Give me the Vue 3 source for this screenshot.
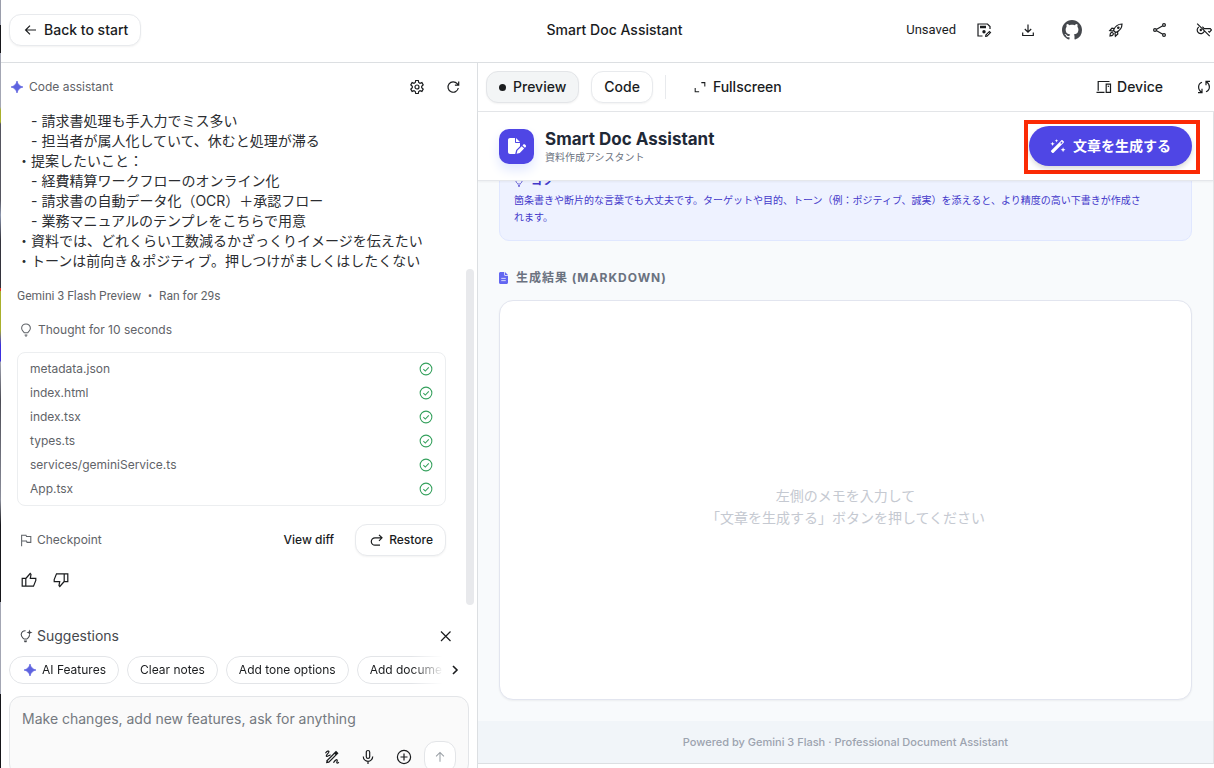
<template>
  <svg class="sprite" aria-hidden="true">
    <symbol id="arrow-left" viewBox="0 0 16 16">
      <path d="M14 8H4M8 3.600 3.600 8 8 12.400" class="line" />
    </symbol>
    <symbol id="arrow-up" viewBox="0 0 16 16">
      <path d="M8 13.5V3M3.5 7.3 8 2.8l4.5 4.5" class="line" />
    </symbol>
    <symbol id="spark" viewBox="0 0 16 16">
      <path d="M8 2C8.700 5.200 10.800 7.300 14 8 10.800 8.700 8.700 10.800 8 14 7.300 10.800 5.200 8.700 2 8 5.200 7.300 7.300 5.200 8 2z" fill="currentColor" stroke="currentColor" stroke-width=".7" />
    </symbol>
    <symbol id="save-edit" viewBox="0 0 16 16">
      <path d="M6.500 14H2V2h9.500l2.500 2.500V7" class="line" />
      <path d="M4 3.800h6v2.400H4zM8 8a1.700 1.700 0 1 1 0 3.400A1.700 1.700 0 0 1 8 8z" fill="currentColor" />
      <path d="m9 15 .3-2.200L13.400 8.700l1.900 1.900-4.100 4.100z" fill="currentColor" />
      <path d="m10.600 13.400 2.700-2.700" stroke="#fff" stroke-width=".8" />
    </symbol>
    <symbol id="download" viewBox="0 0 16 16">
      <path d="M8 2.500v7.500M4.800 7 8 10.200 11.200 7M2.700 10.500v3h10.600v-3" class="line" />
    </symbol>
    <symbol id="github" viewBox="0 0 16 16">
      <path
        fill="currentColor"
        d="M8 0C3.58 0 0 3.58 0 8c0 3.54 2.29 6.53 5.47 7.59.4.07.55-.17.55-.38 0-.19-.01-.82-.01-1.490-2.010.37-2.530-.49-2.690-.94-.09-.23-.48-.94-.82-1.130-.28-.15-.68-.52-.01-.53.63-.01 1.080.58 1.230.82.72 1.210 1.870.87 2.330.66.07-.52.28-.87.51-1.070-1.780-.2-3.640-.89-3.640-3.950 0-.87.31-1.590.82-2.150-.08-.2-.36-1.020.08-2.120 0 0 .67-.21 2.200.82.64-.18 1.320-.27 2-.27s1.360.09 2 .27c1.530-1.040 2.200-.82 2.200-.82.44 1.100.16 1.920.08 2.120.51.56.82 1.270.82 2.150 0 3.070-1.870 3.750-3.650 3.950.29.25.54.73.54 1.480 0 1.070-.01 1.930-.01 2.200 0 .21.15.46.55.38A8.010 8.010 0 0 0 16 8c0-4.420-3.580-8-8-8z"
      />
    </symbol>
    <symbol id="rocket" viewBox="0 0 16 16">
      <path d="M5.500 8.300C7 4.500 9.800 2 14 2c0 4.200-2.500 7-6.300 8.500zM6.300 6.500 4 6.200 1.800 8.600l3.500.5M9.500 9.700l.3 2.300-2.400 2.200-.5-3.500" class="line" />
      <path d="M2 14c0-1.600.3-2.600 1-3.200.6-.5 1.500-.4 1.900.1.600.5.600 1.400.1 2-.5.600-1.500 1-3 1.100z" class="line" />
      <circle cx="10.300" cy="5.700" r="1.300" fill="currentColor" />
    </symbol>
    <symbol id="share" viewBox="0 0 16 16">
      <path d="M4.200 7.400 10.800 3.700M4.200 8.600l6.600 3.700" class="line" />
      <circle cx="3" cy="8" r="1.400" class="line" />
      <circle cx="12" cy="3" r="1.400" class="line" />
      <circle cx="12" cy="13" r="1.400" class="line" />
    </symbol>
    <symbol id="key-off" viewBox="0 0 16 16">
      <path d="M1.200 1.700 13.700 14.200M2.800 4.900a3.700 3.700 0 1 0 5.400 4.700M6.300 4.800c.8.400 1.400 1 1.800 1.900h6.200l1.200 1.300-2 2.200-1.200-.9" class="line" />
      <circle cx="4.800" cy="8" r="1.200" fill="currentColor" />
    </symbol>
    <symbol id="gear" viewBox="0 0 16 16">
      <path d="M6.700 1.500h2.600l.4 2 1.300.8 1.900-.7 1.300 2.300-1.500 1.300v1.600l1.500 1.300-1.300 2.300-1.900-.7-1.300.8-.4 2H6.700l-.4-2-1.300-.8-1.900.7-1.300-2.300 1.500-1.300V7.200L1.800 5.900l1.300-2.300 1.900.7 1.300-.8z" class="line" />
      <circle cx="8" cy="8" r="2" class="line" />
    </symbol>
    <symbol id="refresh" viewBox="0 0 16 16">
      <path d="M13.300 9A5.200 5.200 0 1 1 12.200 4.700L13.500 6M13.700 2.400V6.200H9.900" class="line" />
    </symbol>
    <symbol id="bulb" viewBox="0 0 16 16">
      <path d="M5.500 11.200h5M5.800 11c0-1-2.800-2-2.800-4.900a5 5 0 0 1 10 0C13 9 10.200 10 10.200 11M6.500 13.600h3" class="line" />
      <path d="M6.500 14.200h3l-.6 1.300H7.100z" fill="currentColor" />
    </symbol>
    <symbol id="bulb-spark" viewBox="0 0 16 16">
      <path d="M5.300 11.500h4.200M5.300 11.200C4.800 10 2.500 9.200 2.500 6.400A4.700 4.700 0 0 1 7.500 1.900M12 7c-.1 2.500-2.100 3.200-2.500 4.300" class="line" />
      <path d="M5.500 13h3.800l-.8 2.200H6.300zM12 .5l.9 2.600 2.600.9-2.600.9L12 7.500l-.9-2.600L8.500 4l2.600-.9z" fill="currentColor" />
    </symbol>
    <symbol id="check" viewBox="0 0 16 16">
      <circle cx="8" cy="8" r="6.700" class="line" />
      <path d="m5 8.200 2.200 2.200 4-4.200" class="line" />
    </symbol>
    <symbol id="flag" viewBox="0 0 16 16">
      <path d="M3 15V2.500h5l.6 1.600h4.900v6.600H9.200l-.6-1.600H3" class="line" />
    </symbol>
    <symbol id="redo" viewBox="0 0 16 16">
      <path d="M13.800 5.800H7a3.700 3.700 0 0 0 0 7.400H12M11 2.800l3 3-3 3" class="line" />
    </symbol>
    <symbol id="thumb" viewBox="0 0 16 16">
      <path d="M1.200 6.300h3.600v7.900H1.200zM4.800 6.500l4.400-5 .8.900-.7 3.900h5.500v2.200l-2.300 5.700H4.800" class="line" />
    </symbol>
    <symbol id="close" viewBox="0 0 16 16">
      <path d="m3 3.500 9.500 9.500M12.500 3.500 3 13" class="line" />
    </symbol>
    <symbol id="chevron" viewBox="0 0 16 16">
      <path d="m6 4 4 4-4 4" class="line bold" />
    </symbol>
    <symbol id="draw" viewBox="0 0 16 16">
      <path d="M1.500 4.200c1.500-2.500 3.300-2.500 3.400-1.500.2 1.500-3 3-2.600 4.400.4 1.300 3.200-1.500 4.300-1M9.500 13.700c1.300-2.300 2.900-3.500 3.600-2.800.8.800-.9 2.200-.2 3 .4.500 1.200 0 2-.7" class="line" />
      <path d="M2 14.300 2.600 11.200 12 1.800l2.500 2.500-9.400 9.400z" fill="currentColor" />
      <path d="m4 12.300 7-7" stroke="#fafafa" stroke-width="1.100" />
    </symbol>
    <symbol id="mic" viewBox="0 0 16 16">
      <path d="M8 1.500c1 0 1.700.7 1.700 1.700v4.600a1.700 1.700 0 0 1-3.400 0V3.200c0-1 .7-1.700 1.700-1.700zM3.300 7.600a4.700 4.700 0 0 0 9.400 0M8 12.300V15" class="line" />
    </symbol>
    <symbol id="plus" viewBox="0 0 16 16">
      <circle cx="8" cy="8" r="6.600" class="line" />
      <path d="M8 4.500v7M4.500 8h7" class="line" />
    </symbol>
    <symbol id="expand" viewBox="0 0 16 16">
      <path d="M9.500 3h4v4.500M2.500 9v4.500H7" class="line" />
    </symbol>
    <symbol id="devices" viewBox="0 0 16 16">
      <path d="M13.500 2.500H2.200v9.200M.5 13.300h8" class="line" />
      <path d="M10.200 5.200h4.300v8.100h-4.300z" class="line" />
      <path d="M11.700 6.700h1.400v1.200h-1.400z" fill="currentColor" />
    </symbol>
    <symbol id="sync" viewBox="0 0 16 16">
      <path d="M6 3.300C1.500 5 1.500 11 5.800 13.300M2 13.700h4V9.700M10 12.700c4.500-1.700 4.500-7.700.2-10M14 2.300h-4v4" class="line" />
    </symbol>
    <symbol id="file-pen" viewBox="0 0 18 16">
      <path d="M0 2C0 .9.9 0 2 0h5v4c0 .6.400 1 1 1h4v3.300l-3.800 3.800L7.200 16H2c-1.100 0-2-.9-2-2zM8 0l4 4H8z" fill="currentColor" />
      <path d="m8.600 15.800.8-3.300 4.300-4.300 2.400 2.400-4.300 4.300zM14.500 7.400l.8-.8c.5-.5 1.200-.5 1.700 0l.7.700c.5.5.5 1.200 0 1.700l-.8.800z" fill="currentColor" />
    </symbol>
    <symbol id="file" viewBox="0 0 12 16">
      <path d="M2 0h5v4c0 .6.400 1 1 1h4v9c0 1.100-.9 2-2 2H2c-1.100 0-2-.9-2-2V2C0 .9.900 0 2 0zM8 0l4 4H8z" fill="currentColor" />
      <path d="M3 8.500h6M3 11.500h6" stroke="#fff" />
    </symbol>
    <symbol id="wand" viewBox="0 0 18 16">
      <path d="m1.300 13 11.400-11.400c.5-.5 1.200-.5 1.700 0l1 1c.5.500.5 1.200 0 1.700L4 15.700c-.5.500-1.200.5-1.700 0l-1-1c-.5-.5-.5-1.200 0-1.700z" fill="currentColor" />
      <path d="m11.500 4.500 1.200 1.200 1.500-1.900-.9-.9z" fill="#4f46e5" />
      <path d="m2.800 3 .7 1.800L5.300 5.500l-1.800.7L2.800 8l-.7-1.800L.3 5.500l1.800-.7zM7.300 0l.5 1.500 1.500.5-1.500.5L7.300 4l-.5-1.500L5.300 2l1.500-.5zM14.800 9.500l.8 2 2 .8-2 .8-.8 2-.8-2-2-.8 2-.8z" fill="currentColor" />
    </symbol>
  </svg>

  <div class="app">
    <div class="edge"></div>

    <header class="topbar">
      <button class="btn back">
        <svg class="icon"><use href="#arrow-left" /></svg>
        Back to start
      </button>
      <h1 class="project">Smart Doc Assistant</h1>
      <div class="actions">
        <span class="unsaved">Unsaved</span>
        <button
          v-for="action in actions"
          :key="action.icon"
          class="icon-btn"
          :aria-label="action.label"
        >
          <svg :class="['icon', action.icon]"><use :href="'#' + action.icon" /></svg>
        </button>
      </div>
    </header>

    <div class="workspace">
      <aside class="assistant">
        <div class="assistant-head">
          <svg class="icon accent"><use href="#spark" /></svg>
          <span class="assistant-name">Code assistant</span>
          <button class="icon-btn" aria-label="Settings">
            <svg class="icon"><use href="#gear" /></svg>
          </button>
          <button class="icon-btn" aria-label="Reset">
            <svg class="icon"><use href="#refresh" /></svg>
          </button>
        </div>

        <div class="chat">
          <p class="prompt">{{ prompt }}</p>
          <p class="run-info">Gemini 3 Flash Preview<span class="dot">•</span>Ran for 29s</p>
          <p class="thought">
            <svg class="icon small"><use href="#bulb" /></svg>
            Thought for 10 seconds
          </p>
          <ul class="files">
            <li v-for="file in files" :key="file">
              {{ file }}
              <svg class="icon small done"><use href="#check" /></svg>
            </li>
          </ul>
          <div class="checkpoint">
            <svg class="icon small"><use href="#flag" /></svg>
            <span class="checkpoint-label">Checkpoint</span>
            <button class="btn-text">View diff</button>
            <button class="btn restore">
              <svg class="icon"><use href="#redo" /></svg>
              Restore
            </button>
          </div>
          <div class="feedback">
            <button class="icon-btn" aria-label="Good response">
              <svg class="icon"><use href="#thumb" /></svg>
            </button>
            <button class="icon-btn" aria-label="Bad response">
              <svg class="icon flipped"><use href="#thumb" /></svg>
            </button>
          </div>
        </div>
        <div class="scrollbar"></div>

        <div class="suggest-head">
          <svg class="icon small"><use href="#bulb-spark" /></svg>
          <span>Suggestions</span>
          <button class="icon-btn" aria-label="Close suggestions">
            <svg class="icon"><use href="#close" /></svg>
          </button>
        </div>
        <div class="suggest-row">
          <div class="chips">
            <button v-for="(chip, i) in chips" :key="chip" class="chip">
              <svg v-if="i === 0" class="icon accent"><use href="#spark" /></svg>
              {{ chip }}
            </button>
          </div>
          <button class="next" aria-label="More suggestions">
            <svg class="icon"><use href="#chevron" /></svg>
          </button>
        </div>

        <div class="composer">
          <textarea
            v-model="message"
            rows="1"
            aria-label="Message"
            placeholder="Make changes, add new features, ask for anything"
          ></textarea>
          <div class="tools">
            <button class="icon-btn" aria-label="Annotate">
              <svg class="icon"><use href="#draw" /></svg>
            </button>
            <button class="icon-btn" aria-label="Voice input">
              <svg class="icon"><use href="#mic" /></svg>
            </button>
            <button class="icon-btn" aria-label="Add file">
              <svg class="icon"><use href="#plus" /></svg>
            </button>
            <button class="send" aria-label="Send">
              <svg class="icon small"><use href="#arrow-up" /></svg>
            </button>
          </div>
        </div>
      </aside>

      <section class="stage">
        <div class="toolbar">
          <button
            :class="['btn', 'tab', { active: view === 'preview' }]"
            @click="view = 'preview'"
          >
            <span v-if="view === 'preview'" class="tab-dot"></span>
            Preview
          </button>
          <button :class="['btn', 'tab', { active: view === 'code' }]" @click="view = 'code'">
            <span v-if="view === 'code'" class="tab-dot"></span>
            Code
          </button>
          <span class="divider"></span>
          <button class="tool">
            <svg class="icon small"><use href="#expand" /></svg>
            Fullscreen
          </button>
          <button class="tool device">
            <svg class="icon"><use href="#devices" /></svg>
            Device
          </button>
          <button class="icon-btn" aria-label="Reload preview">
            <svg class="icon"><use href="#sync" /></svg>
          </button>
        </div>

        <div class="preview">
          <header class="doc-head">
            <span class="logo">
              <svg><use href="#file-pen" /></svg>
            </span>
            <div class="brand">
              <h2>Smart Doc Assistant</h2>
              <p>資料作成アシスタント</p>
            </div>
            <div class="generate-wrap">
              <button class="generate">
                <svg><use href="#wand" /></svg>
                文章を生成する
              </button>
            </div>
          </header>

          <main class="doc-body">
            <div class="tip">
              <h3>
                <svg class="icon tiny"><use href="#bulb" /></svg>
                コツ
              </h3>
              <p>
                箇条書きや断片的な言葉でも大丈夫です。ターゲットや目的、トーン（例：ポジティブ、誠実）を添えると、より精度の高い下書きが作成さ<br />れます。
              </p>
            </div>
            <h3 class="result-title">
              <svg><use href="#file" /></svg>
              生成結果 (MARKDOWN)
            </h3>
            <div class="result">
              <p>左側のメモを入力して<br />「文章を生成する」ボタンを押してください</p>
            </div>
          </main>

          <footer class="doc-foot">Powered by Gemini 3 Flash · Professional Document Assistant</footer>
        </div>
      </section>
    </div>
  </div>
</template>

<script setup>
import { ref } from 'vue';

const view = ref('preview');
const message = ref('');

const actions = [
  { icon: 'save-edit', label: 'Save' },
  { icon: 'download', label: 'Download' },
  { icon: 'github', label: 'GitHub' },
  { icon: 'rocket', label: 'Deploy' },
  { icon: 'share', label: 'Share' },
  { icon: 'key-off', label: 'API key' }
];

const prompt = [
  '　- 請求書処理も手入力でミス多い',
  '　- 担当者が属人化していて、休むと処理が滞る',
  '・提案したいこと：',
  '　- 経費精算ワークフローのオンライン化',
  '　- 請求書の自動データ化（OCR）＋承認フロー',
  '　- 業務マニュアルのテンプレをこちらで用意',
  '・資料では、どれくらい工数減るかざっくりイメージを伝えたい',
  '・トーンは前向き＆ポジティブ。押しつけがましくはしたくない'
].join('\n');

const files = [
  'metadata.json',
  'index.html',
  'index.tsx',
  'types.ts',
  'services/geminiService.ts',
  'App.tsx'
];

const chips = ['AI Features', 'Clear notes', 'Add tone options', 'Add document types'];
</script>

<style>
body {
  margin: 0;
  overflow: hidden;
}
</style>

<style scoped>
.sprite {
  position: absolute;
  width: 0;
  height: 0;
}

.line {
  fill: none;
  stroke: currentColor;
  stroke-width: 1.2;
}

.line.bold {
  stroke-width: 1.6;
}

.app {
  position: relative;
  display: flex;
  flex-direction: column;
  height: 100vh;
  padding-left: 1px;
  box-sizing: border-box;
  overflow: hidden;
  background: #fff;
  color: #1a1c1e;
  font-family: Inter, 'Noto Sans CJK JP', sans-serif;
  font-size: 14px;
  line-height: 20px;
}

.app *,
.app *::before {
  box-sizing: border-box;
}

h1,
h2,
h3,
p,
ul {
  margin: 0;
  padding: 0;
}

button {
  display: inline-flex;
  align-items: center;
  justify-content: center;
  flex: none;
  padding: 0;
  border: none;
  background: none;
  color: inherit;
  font: inherit;
  white-space: nowrap;
  cursor: pointer;
}

/* Sliver of the window behind */
.edge {
  position: absolute;
  left: 0;
  top: 0;
  width: 1px;
  height: 100%;
  background: linear-gradient(
    #9a9dab 0 25px,
    #16161a 25px 53px,
    #a3a6b3 53px 107px,
    #a9b02c 110px 122px,
    #55555f 124px 200px,
    #8b95ad 215px,
    #33333c 240px 288px,
    #e0341f 288px 291px,
    #a9b02c 291px 330px,
    #3b2fe0 345px 361px,
    #a3a6b3 362px,
    #4c4c55 400px,
    #8b8e9b 500px,
    #16161a 525px 602px,
    #a3a6b3 602px 694px,
    #16161a 694px
  );
}

.icon {
  width: 16px;
  height: 16px;
  flex: none;
}

.icon.small {
  width: 14px;
  height: 14px;
}

.icon.tiny {
  width: 10px;
  height: 10px;
}

.icon.github {
  width: 20px;
  height: 20px;
  color: #45484d;
}

.icon.accent {
  color: #5e63e0;
}

.icon.flipped {
  transform: rotate(180deg);
}

.icon-btn {
  width: 32px;
  height: 32px;
}

.btn {
  height: 32px;
  border: 1px solid #e8eaed;
  border-radius: 12px;
  background: #fff;
  box-shadow: 0 1px 2px rgba(0, 0, 0, 0.05);
  font-weight: 500;
}

/* Top bar */
.topbar {
  display: grid;
  grid-template-columns: 1fr auto 1fr;
  align-items: center;
  flex: none;
  height: 63px;
  margin-right: -14px;
  padding: 0 8px 2px;
  border-bottom: 1px solid #dcdfe2;
}

.back {
  justify-self: start;
  gap: 6px;
  padding: 0 12px;
}

.project {
  font-size: 14px;
  font-weight: 500;
}

.actions {
  display: flex;
  justify-content: flex-end;
  align-items: center;
  gap: 12px;
}

.unsaved {
  font-family: Roboto, sans-serif;
  font-size: 13px;
}

.workspace {
  display: flex;
  flex: 1;
  min-height: 0;
}

/* Assistant panel */
.assistant {
  position: relative;
  display: flex;
  flex-direction: column;
  flex: 0 1 477px;
  min-width: 0;
  border-right: 1px solid #dcdfe2;
}

.assistant-head {
  display: flex;
  align-items: center;
  flex: none;
  gap: 4px;
  height: 48px;
  padding: 0 8px;
  color: #5f6368;
  font-size: 12px;
}

.assistant-head .icon-btn {
  color: #1a1c1e;
}

.assistant-name {
  flex: 1;
}

.chat {
  flex: 1;
  min-height: 0;
  overflow: hidden;
  padding: 0 31px 0 16px;
  color: #5f6368;
  font-size: 12px;
}

.prompt {
  color: #2b2d31;
  font-size: 14px;
  white-space: pre-wrap;
}

.run-info {
  margin-top: 15px;
  font-family: Roboto, sans-serif;
}

.dot {
  margin: 0 7px;
}

.thought {
  display: flex;
  align-items: center;
  gap: 5px;
  margin-top: 14px;
  padding-left: 2px;
  color: #5f6368;
}

.files {
  margin-top: 12px;
  padding: 4px 12px;
  border: 1px solid #eceef0;
  border-radius: 8px;
  list-style: none;
}

.files li {
  display: flex;
  align-items: center;
  justify-content: space-between;
  height: 24px;
}

.done {
  color: #34a05c;
}

.checkpoint {
  display: flex;
  align-items: center;
  gap: 4px;
  margin-top: 18px;
  padding-left: 2px;
}

.checkpoint-label {
  flex: 1;
}

.btn-text {
  margin-right: 17px;
  color: #1a1c1e;
  font-weight: 500;
}

.restore {
  gap: 5px;
  padding: 0 12px;
  color: #1a1c1e;
}

.feedback {
  display: flex;
  margin: 8px 0 0 -4px;
  color: #1a1c1e;
}

.scrollbar {
  position: absolute;
  top: 206px;
  right: 3px;
  width: 8px;
  height: 336px;
  border-radius: 4px;
  background: #e8e9ec;
}

.suggest-head {
  display: flex;
  align-items: center;
  flex: none;
  gap: 4px;
  height: 32px;
  margin-top: 12px;
  padding: 0 15px 0 18px;
  color: #45484d;
}

.suggest-head span {
  flex: 1;
}

.suggest-head .icon-btn {
  color: #1a1c1e;
}

.suggest-row {
  display: flex;
  align-items: center;
  flex: none;
  gap: 4px;
  height: 36px;
  padding: 0 14px 0 8px;
}

.chips {
  display: flex;
  flex: 1;
  gap: 8px;
  min-width: 0;
  overflow: hidden;
  mask-image: linear-gradient(to left, transparent, #000 32px);
}

.chip {
  gap: 4px;
  height: 28px;
  padding: 0 12px;
  border: 1px solid #e3e5e8;
  border-radius: 14px;
  font-size: 12px;
}

.next {
  width: 16px;
}

.composer {
  flex: none;
  height: 80px;
  margin: 8px 8px -8px;
  padding: 12px;
  border: 1px solid #e3e5e8;
  border-radius: 12px;
  background: #fafafa;
}

.composer textarea {
  display: block;
  width: 100%;
  height: 20px;
  padding: 0;
  border: none;
  outline: none;
  resize: none;
  background: none;
  color: inherit;
  font: inherit;
}

.composer textarea::placeholder {
  color: #747980;
}

.tools {
  display: flex;
  justify-content: flex-end;
  gap: 4px;
  margin-top: 12px;
}

.send {
  width: 32px;
  height: 32px;
  border: 1px solid #e3e5e8;
  border-radius: 12px;
  background: #fff;
  color: #9aa0a6;
}

/* Preview side */
.stage {
  display: flex;
  flex-direction: column;
  flex: 1;
  min-width: 0;
}

.toolbar {
  display: flex;
  align-items: center;
  flex: none;
  height: 49px;
  margin-right: -6px;
  padding-left: 8px;
  border-bottom: 1px solid #e3e5e8;
}

.tab {
  gap: 7px;
  margin-right: 12px;
  padding: 0 12px;
}

.tab.active {
  border-color: #e3e5e8;
  background: #f3f5f6;
}

.tab-dot {
  width: 7px;
  height: 7px;
  border-radius: 50%;
  background: #1a1c1e;
}

.divider {
  width: 1px;
  height: 24px;
  margin-right: 27px;
  background: #e8eaed;
}

.tool {
  gap: 6px;
  height: 32px;
  font-weight: 500;
}

.device {
  gap: 5px;
  margin-left: auto;
  margin-right: 25px;
}

.preview {
  display: flex;
  flex-direction: column;
  flex: 1;
  min-height: 0;
  margin-bottom: 4px;
  border-right: 1px solid #e3e5e8;
  border-bottom: 1px solid #dcdfe2;
  background: #f8fafc;
}

.doc-head {
  position: relative;
  display: flex;
  align-items: center;
  flex: none;
  height: 69px;
  padding: 0 21px;
  background: #fff;
  border-bottom: 1px solid #e5e7eb;
  box-shadow: 0 1px 2px rgba(0, 0, 0, 0.05);
}

.logo {
  display: flex;
  align-items: center;
  justify-content: center;
  width: 35px;
  height: 35px;
  border-radius: 10px;
  background: #4f46e5;
  color: #fff;
  box-shadow: 0 6px 12px #e0e7ff;
}

.logo svg {
  width: 18px;
  height: 16px;
}

.brand {
  flex: 1;
  margin-left: 11px;
}

.brand h2 {
  color: #1f2937;
  font-size: 17px;
  font-weight: 700;
  line-height: 22px;
}

.brand p {
  color: #6b7280;
  font-size: 10px;
  line-height: 14px;
}

.generate-wrap {
  position: relative;
}

.generate-wrap::before {
  content: '';
  position: absolute;
  inset: -6px -8px -8px -5px;
  border: 4px solid #fb2a05;
}

.generate {
  position: relative;
  gap: 7px;
  height: 40px;
  padding: 0 21px;
  border-radius: 20px;
  background: #4f46e5;
  color: #fff;
  font-weight: 700;
  box-shadow: 0 3px 5px rgba(0, 0, 0, 0.14);
}

.generate svg {
  width: 16px;
  height: 14px;
}

.doc-body {
  display: flex;
  flex-direction: column;
  justify-content: flex-end;
  flex: 1;
  min-height: 0;
  overflow: hidden;
  padding: 0 21px 21px;
}

.tip {
  flex: none;
  padding: 14px;
  border: 1px solid #e0e7ff;
  border-radius: 10px;
  background: #eef2ff;
  color: #4338ca;
  font-size: 10px;
  line-height: 17px;
}

.tip h3 {
  display: flex;
  align-items: center;
  gap: 7px;
  margin-bottom: 2px;
  font-size: 11px;
  font-weight: 700;
}

.result-title {
  display: flex;
  align-items: center;
  flex: none;
  gap: 8px;
  margin: 26px 0 12px;
  color: #6b7280;
  font-size: 12px;
  font-weight: 700;
  line-height: 21px;
  letter-spacing: 1px;
}

.result-title svg {
  width: 9px;
  height: 12px;
  color: #6366f1;
}

.result {
  display: flex;
  align-items: center;
  justify-content: center;
  flex: none;
  height: 400px;
  padding-top: 13px;
  border: 1px solid #e2e5ef;
  border-radius: 14px;
  background: #fff;
  color: #c5c9d1;
  text-align: center;
  line-height: 22px;
  box-shadow: 0 1px 2px rgba(0, 0, 0, 0.05);
}

.doc-foot {
  flex: none;
  height: 42px;
  background: #f1f5f9;
  color: #9ca3af;
  font-size: 11px;
  font-weight: 500;
  line-height: 42px;
  text-align: center;
}
</style>
